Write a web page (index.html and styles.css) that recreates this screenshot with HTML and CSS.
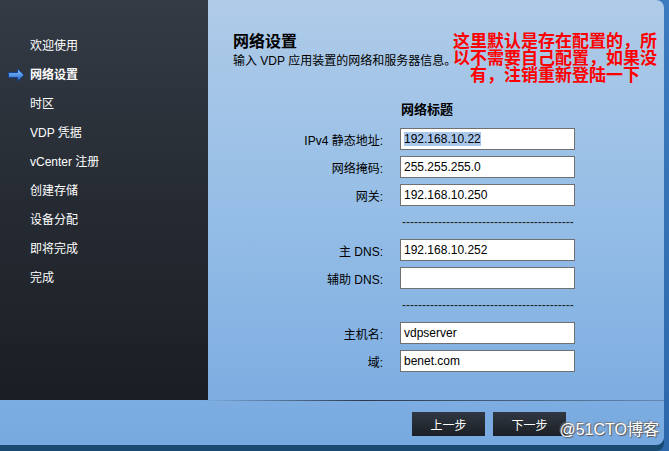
FILE: index.html
```html
<!DOCTYPE html>
<html lang="zh-CN">

<head>
  <meta charset="UTF-8">
  <meta name="viewport" content="width=device-width, initial-scale=1.0">
  <title>VDP 网络设置</title>
  <link rel="stylesheet" href="styles.css">
</head>

<body>
  <div class="wizard">
    <div class="main">
      <ul class="steps">
        <li>欢迎使用</li>
        <li class="active">
          <svg class="arrow" width="17" height="14" viewBox="0 0 17 14">
            <defs>
              <linearGradient id="arrowFill" x1="0" y1="0" x2="0" y2="1">
                <stop offset="0" stop-color="#8cc8ff" />
                <stop offset="1" stop-color="#1f63c8" />
              </linearGradient>
            </defs>
            <path d="M0.5 4.5 H9.5 V0.8 L16 7 L9.5 13.2 V9.5 H0.5 Z" fill="url(#arrowFill)" stroke="#163f8c" stroke-width="1" />
          </svg>
          网络设置
        </li>
        <li>时区</li>
        <li>VDP 凭据</li>
        <li>vCenter 注册</li>
        <li>创建存储</li>
        <li>设备分配</li>
        <li>即将完成</li>
        <li>完成</li>
      </ul>

      <div class="content">
        <h1 class="title">网络设置</h1>
        <p class="subtitle">输入 VDP 应用装置的网络和服务器信息。</p>

        <div class="form">
          <span></span>
          <span class="formTitle">网络标题</span>

          <label>IPv4 静态地址:</label>
          <div class="field"><span class="sel">192.168.10.22</span></div>

          <label>网络掩码:</label>
          <div class="field">255.255.255.0</div>

          <label>网关:</label>
          <div class="field">192.168.10.250</div>

          <span></span>
          <span class="dashes">-------------------------------------------</span>

          <label>主 DNS:</label>
          <div class="field">192.168.10.252</div>

          <label>辅助 DNS:</label>
          <div class="field"></div>

          <span></span>
          <span class="dashes">-------------------------------------------</span>

          <label>主机名:</label>
          <div class="field">vdpserver</div>

          <label>域:</label>
          <div class="field">benet.com</div>
        </div>

        <div class="note">这里默认是存在配置的，所以不需要自己配置，如果没有，注销重新登陆一下</div>
      </div>
    </div>

    <div class="footer">
      <button class="navButton">上一步</button>
      <button class="navButton">下一步</button>
    </div>

    <span class="watermark">@51CTO博客</span>
  </div>
</body>

</html>
```

FILE: styles.css
```css
* {
  box-sizing: border-box;
}

body {
  margin: 0;
  width: 669px;
  height: 451px;
  overflow: hidden;
  font-family: "Liberation Sans", "Noto Sans CJK SC", sans-serif;
  font-size: 12px;
  background: linear-gradient(180deg, #3c7bc0 0%, #2c68aa 100%);
}

.wizard {
  position: relative;
  width: 664px;
  height: 445px;
  background: linear-gradient(180deg, #afcbe8 0%, #94bde6 50%, #77a9e0 100%);
  border-radius: 0 8px 8px 0;
  box-shadow: 0 6px 0 #1b4a70;
}

.main {
  display: flex;
  height: 400px;
}

.steps {
  list-style: none;
  margin: 0;
  padding: 32px 0 0 0;
  width: 208px;
  background: linear-gradient(180deg, #343b45 0%, #262b33 50%, #1b1e24 100%);
}

.steps li {
  position: relative;
  height: 29px;
  line-height: 29px;
  padding-left: 30px;
  color: #fff;
  font-size: 12px;
}

.steps li.active {
  font-weight: bold;
}

.steps .arrow {
  position: absolute;
  left: 8px;
  top: 7px;
}

.content {
  position: relative;
  flex: 1;
  padding: 31px 0 0 25px;
}

.title {
  margin: 0;
  font-size: 16px;
  line-height: 21px;
  font-weight: bold;
  color: #000;
}

.subtitle {
  margin: 1px 0 0 0;
  font-size: 12px;
  line-height: 17px;
  color: #000;
}

.form {
  display: grid;
  grid-template-columns: 150px 175px;
  column-gap: 17px;
  row-gap: 6px;
  margin-top: 32px;
  align-items: center;
}

.formTitle {
  padding-left: 1px;
  font-size: 13px;
  font-weight: bold;
  line-height: 16px;
  margin-bottom: 4px;
}

.form label {
  text-align: right;
  color: #000;
}

.field {
  height: 22px;
  line-height: 20px;
  padding: 0 3px;
  background: #fff;
  border: 1px solid #707070;
  color: #000;
  white-space: nowrap;
}

.field .sel {
  background: #a9c8ec;
}

.dashes {
  height: 21px;
  line-height: 21px;
  white-space: nowrap;
  color: #222;
  padding-left: 2px;
}

.note {
  position: absolute;
  top: 33px;
  left: 244px;
  width: 206px;
  text-align: center;
  color: #ff0000;
  font-size: 17px;
  line-height: 17px;
  font-weight: bold;
}

.footer {
  display: flex;
  justify-content: flex-end;
  gap: 8px;
  padding: 12px 98px 0 0;
  height: 45px;
  background: linear-gradient(90deg, rgba(40, 55, 75, 0) 30%, #2b3a4f 55%, rgba(40, 55, 75, 0.3) 100%) top / 100% 1px no-repeat;
}

.navButton {
  width: 73px;
  height: 24px;
  border: none;
  background: linear-gradient(180deg, #313843 0%, #1b1f25 100%);
  color: #fff;
  font-family: "Liberation Sans", "Noto Sans CJK SC", sans-serif;
  font-size: 12px;
  cursor: pointer;
}

.watermark {
  position: absolute;
  right: 5px;
  bottom: 5px;
  color: #fff;
  font-size: 16px;
  text-shadow: 1px 1px 1px #555, -1px -1px 1px #777;
}
```
